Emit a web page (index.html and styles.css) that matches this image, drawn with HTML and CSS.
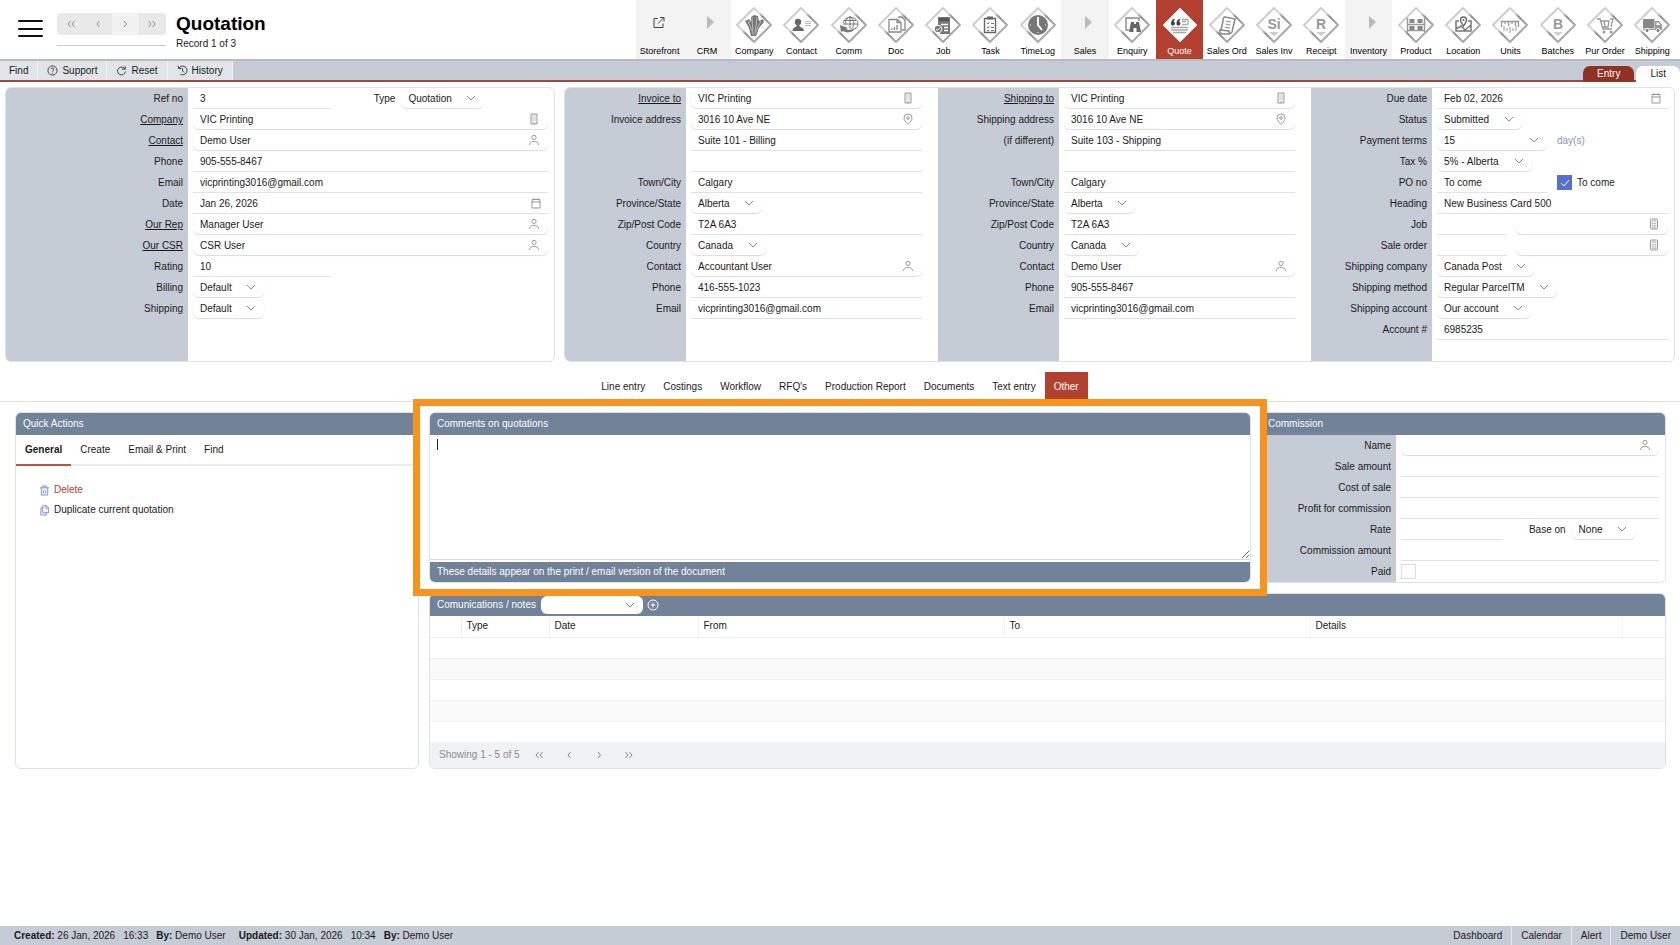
FILE: index.html
```html
<!DOCTYPE html>
<html lang="en">
<head>
    <meta charset="UTF-8">
    <meta name="viewport" content="width=device-width, initial-scale=1.0">
    <title>Quotation</title>
    <link rel="stylesheet" href="styles.css">
</head>
<body>
    <!-- shared icons -->
    <svg class="sprite" aria-hidden="true">
        <linearGradient id="edge" x1="0" y1="0" x2="1" y2="1">
            <stop offset="0" stop-color="#b4b4b4"/>
            <stop offset=".4" stop-color="#dcdcdc"/>
            <stop offset=".5" stop-color="#8f8f8f"/>
            <stop offset="1" stop-color="#c4c4c4"/>
        </linearGradient>
        <symbol id="diamond" viewBox="0 0 38 38">
            <path d="M19 2 36 19 19 36 2 19Z" fill="#fff" stroke="url(#edge)" stroke-width="2" stroke-linejoin="round"/>
        </symbol>
        <symbol id="i-building" viewBox="0 0 12 12">
            <path d="M3 1h6v10H3z" fill="#f4f4f4" stroke="#999"/>
            <path d="M4.500 3h1M6.500 3h1M4.500 5h1M6.500 5h1M4.500 7h1M6.500 7h1M6 9v2" stroke="#999" stroke-width=".8"/>
        </symbol>
        <symbol id="i-user" viewBox="0 0 12 12">
            <circle cx="6" cy="3.400" r="2.100" fill="none" stroke="#999"/>
            <path d="M1.500 11c0-5 9-5 9 0" fill="none" stroke="#999"/>
        </symbol>
        <symbol id="i-pin" viewBox="0 0 12 12">
            <path d="M6 11.300C3.500 9 2 7 2 5a4 4 0 0 1 8 0c0 2-1.500 4-4 6.300z" fill="none" stroke="#999"/>
            <circle cx="6" cy="5" r="1.300" fill="none" stroke="#999"/>
        </symbol>
        <symbol id="i-cal" viewBox="0 0 12 12">
            <path d="M2 2.500h8v8.500H2zM2 5h8M4 .8v2.500M8 .8v2.500" fill="none" stroke="#999"/>
        </symbol>
        <symbol id="i-calc" viewBox="0 0 12 12">
            <rect x="2.500" y="1" width="7" height="10" rx="1" fill="#f4f4f4" stroke="#999"/>
            <path d="M4 3h4M4 5.500h1M5.500 5.500h1M7 5.500h1M4 7.300h1M5.500 7.300h1M7 7.300h1M4 9.200h4" stroke="#999" stroke-width=".8"/>
        </symbol>
    </svg>

    <header class="header">
        <div class="header-left">
            <button class="burger" aria-label="Menu"><span></span><span></span><span></span></button>
            <div class="record-nav">
                <div class="record-buttons">
                    <button aria-label="First"><svg viewBox="0 0 12 12"><path d="M5.500 3 3 6l2.500 3M9.500 3 7 6l2.500 3"/></svg></button>
                    <button aria-label="Previous"><svg viewBox="0 0 12 12"><path d="M7.500 3 5 6l2.500 3"/></svg></button>
                    <button aria-label="Next" disabled><svg viewBox="0 0 12 12"><path d="M5 3l2.500 3L5 9"/></svg></button>
                    <button aria-label="Last"><svg viewBox="0 0 12 12"><path d="M2.500 3 5 6 2.500 9M6.500 3 9 6 6.500 9"/></svg></button>
                </div>
                <div class="record-line"></div>
            </div>
            <div class="title">
                <h1>Quotation</h1>
                <p>Record 1 of 3</p>
            </div>
        </div>
        <nav class="modules">
            <a href="#" class="module group">
                <svg viewBox="0 0 38 38"><path d="M17 12.500h-4v9h9v-4M17 17.500l6-6M19 11.500h4v4" fill="none" stroke="#444"/></svg>
                <span>Storefront</span>
            </a>
            <a href="#" class="module group">
                <svg viewBox="0 0 38 38"><path d="M19 10l7 6-7 7z" fill="#bbb"/></svg>
                <span>CRM</span>
            </a>
            <a href="#" class="module">
                <svg viewBox="0 0 38 38"><use href="#diamond"/><path d="M10 15l4-2 2 3V11l3-2 4 1 1 5 4-2 1 3-5 6-3 8h-5l-2-8z" fill="#777"/><path d="M17 11l1 18M13 15l4 10M22 11l-2 17M26 15l-5 10" stroke="#ccc" stroke-width=".8"/></svg>
                <span>Company</span>
            </a>
            <a href="#" class="module">
                <svg viewBox="0 0 38 38"><use href="#diamond"/><circle cx="16" cy="16" r="3.200" fill="#666"/><path d="M10.500 25c0-4 3.500-3 4.500-6h2c1 3 5 2 5 6z" fill="#666"/><path d="M23 15.500h6M23 17.500h6M23 19.500h6" stroke="#bbb"/></svg>
                <span>Contact</span>
            </a>
            <a href="#" class="module">
                <svg viewBox="0 0 38 38"><use href="#diamond"/><path d="M13 17a7.500 6.500 0 1 1 12 6M20 10.500v12M14 14.500h12M13 18h14.500M20 10.500c-5 3-5 6-4 8M20 10.500c5 4 5 9 1 13" fill="none" stroke="#777"/><path d="M10 19l8 3-2 1c3 2 7 1 10-2-2 5-8 7-13 4l-2 1z" fill="#777"/></svg>
                <span>Comm</span>
            </a>
            <a href="#" class="module">
                <svg viewBox="0 0 38 38"><use href="#diamond"/><path d="M22 12.500V11h3l3 3v10h-3M12 13.500h8l4 3V26H12zM20 13.500v3h4" fill="none" stroke="#888" stroke-width="1.300"/><path d="M15 24v-2M17.500 24v-3M20 24v-5" stroke="#888" stroke-width="1.300"/></svg>
                <span>Doc</span>
            </a>
            <a href="#" class="module">
                <svg viewBox="0 0 38 38"><use href="#diamond"/><path d="M14 11h12v17H16v-6h-2z" fill="#777"/><path d="M15 13.500h10" stroke="#555" stroke-width="3"/><path d="M17 18.500h7M20 21.500h4M20 24.500h4" stroke="#fff" stroke-width="1.300"/><circle cx="14" cy="23" r="3.800" fill="#777" stroke="#fff"/><path d="M12 23l1.500 1.500 2.500-3" fill="none" stroke="#fff"/></svg>
                <span>Job</span>
            </a>
            <a href="#" class="module">
                <svg viewBox="0 0 38 38"><use href="#diamond"/><path d="M13.500 12.500h11v14h-11z" fill="none" stroke="#666" stroke-width="1.400"/><path d="M16 10.500h6v3h-6z" fill="#666"/><path d="M16 17l1 1 1.500-2M16 21l1 1 1.500-2M20 17.500h3M20 21.500h3M16 24.500h2M20 24.500h3" fill="none" stroke="#777"/></svg>
                <span>Task</span>
            </a>
            <a href="#" class="module">
                <svg viewBox="0 0 38 38"><use href="#diamond"/><circle cx="19" cy="19" r="10" fill="#777"/><path d="M19 11v8l4 5" fill="none" stroke="#fff" stroke-width="2"/><path d="M11 19h1M26 19h1M19 26v1" stroke="#fff"/></svg>
                <span>TimeLog</span>
            </a>
            <a href="#" class="module group">
                <svg viewBox="0 0 38 38"><path d="M19 10l7 6-7 7z" fill="#bbb"/></svg>
                <span>Sales</span>
            </a>
            <a href="#" class="module">
                <svg viewBox="0 0 38 38"><use href="#diamond"/><path d="M16 24h-3V12h13v3" fill="none" stroke="#888" stroke-width="1.400"/><path d="M18 16h3v2h2v-2h3l2 10h-4.500v-4h-3v4H16z" fill="#666"/></svg>
                <span>Enquiry</span>
            </a>
            <a href="#" class="module active">
                <svg viewBox="0 0 38 38"><path d="M19 2 36 19 19 36 2 19Z" fill="#fff" stroke="#ddd" stroke-linejoin="round"/><path d="M10 18c0-3 1-5 4-5l-1.500 2.500c2 0 2 4-.5 4-1 0-2-.5-2-1.500zM15.500 18c0-3 1-5 4-5L18 15.500c2 0 2 4-.5 4-1 0-2-.5-2-1.500z" fill="#444"/><path d="M21 13.500h6v5M21 15.500h4M21 18.500h6M10 21.500h17M10 24h17M12 26.500h13" fill="none" stroke="#aaa" stroke-width="1.300"/></svg>
                <span>Quote</span>
            </a>
            <a href="#" class="module">
                <svg viewBox="0 0 38 38"><use href="#diamond"/><path d="M17 11l10 2-3 13c-1 2-3 1-3 0v-1l-9-1c-1 3 1 4 3 4h7M17 11c-2 0-2 2-2 4l-2 9" fill="none" stroke="#888" stroke-width="1.500"/><path d="M18 15l5 1M17.500 18l5 1M17 21l5 1" stroke="#888"/></svg>
                <span>Sales Ord</span>
            </a>
            <a href="#" class="module">
                <svg viewBox="0 0 38 38"><use href="#diamond"/><text x="19" y="23" class="glyph">Si</text><path d="M14 26h10l-5 4z" fill="#ccc"/></svg>
                <span>Sales Inv</span>
            </a>
            <a href="#" class="module">
                <svg viewBox="0 0 38 38"><use href="#diamond"/><text x="19" y="23" class="glyph">R</text><path d="M14 26h10l-5 4z" fill="#ccc"/></svg>
                <span>Receipt</span>
            </a>
            <a href="#" class="module group">
                <svg viewBox="0 0 38 38"><path d="M19 10l7 6-7 7z" fill="#bbb"/></svg>
                <span>Inventory</span>
            </a>
            <a href="#" class="module">
                <svg viewBox="0 0 38 38"><use href="#diamond"/><path d="M10.500 12v14M27.500 12v14M10 18.500h18M10 24.500h18" stroke="#999" stroke-width="1.500"/><path d="M12.500 13h5v4h-5zM20.500 13h5v4h-5zM12.500 20h5v4h-5zM20.500 20h5v4h-5z" fill="#888"/></svg>
                <span>Product</span>
            </a>
            <a href="#" class="module">
                <svg viewBox="0 0 38 38"><use href="#diamond"/><path d="M15 15h-3v10h15V15h-3M12 23l5-3 4 4 6-5" fill="none" stroke="#777" stroke-width="1.500"/><path d="M19.500 20c-2-3-3-4-3-6a3 3 0 0 1 6 0c0 2-1 3-3 6z" fill="#fff" stroke="#666" stroke-width="1.400"/><circle cx="19.500" cy="14" r="1" fill="#666"/></svg>
                <span>Location</span>
            </a>
            <a href="#" class="module">
                <svg viewBox="0 0 38 38"><use href="#diamond"/><path d="M10 15.500h18M10.500 15v6M14 15v3M17.500 15v5M21 15v3M24.500 15v5M27.500 15v6" fill="none" stroke="#999" stroke-width="1.300"/><path d="M13 20v5M16 22v3M19 21v6M22 22v3M25 20v5" stroke="#bbb" stroke-width="1.500"/></svg>
                <span>Units</span>
            </a>
            <a href="#" class="module">
                <svg viewBox="0 0 38 38"><use href="#diamond"/><text x="19" y="23" class="glyph">B</text><path d="M14 26h10l-5 4z" fill="#ccc"/></svg>
                <span>Batches</span>
            </a>
            <a href="#" class="module">
                <svg viewBox="0 0 38 38"><use href="#diamond"/><path d="M11 13h3l3 10h9M15 15h8l-1 6h-6M18 15l1 6M24 13h3l-2 8" fill="none" stroke="#999" stroke-width="1.300"/><circle cx="18" cy="26" r="1.500" fill="#999"/><circle cx="25" cy="26" r="1.500" fill="#999"/></svg>
                <span>Pur Order</span>
            </a>
            <a href="#" class="module">
                <svg viewBox="0 0 38 38"><use href="#diamond"/><path d="M10 13h11.500v9H10z" fill="#888"/><path d="M22 15h4l3 4v5H10v-1.500h12z" fill="#999"/><path d="M23.500 16.500h2l1.500 2.500h-3.500z" fill="#fff"/><circle cx="14" cy="24.500" r="2" fill="#777" stroke="#fff"/><circle cx="25" cy="24.500" r="2" fill="#777" stroke="#fff"/></svg>
                <span>Shipping</span>
            </a>
        </nav>
    </header>

    <div class="toolbar">
        <button class="tool">Find</button>
        <button class="tool"><svg viewBox="0 0 12 12"><circle cx="6" cy="6" r="5"/><path d="M4.500 4.800c0-2 3-2 3-.2C7.500 5.800 6 5.800 6 7.200M6 8.200v1"/></svg>Support</button>
        <button class="tool"><svg viewBox="0 0 12 12"><path d="M9.800 4.500A4.300 4.300 0 1 0 10.300 7M10 1v3.500H6.500"/></svg>Reset</button>
        <button class="tool"><svg viewBox="0 0 12 12"><path d="M2 3.500A4.800 4.800 0 1 1 3.500 10M1 .8l.8 3h3M6 3.500v3l2 1.500"/></svg>History</button>
        <div class="view-tabs">
            <button class="view-tab active">Entry</button>
            <button class="view-tab">List</button>
        </div>
    </div>

    <main class="main">
        <section class="details">
            <div class="panel form form-wide">
                <div class="row">
                    <label for="ref">Ref no</label>
                    <div class="field">
                        <input id="ref" class="line part" value="3">
                        <label for="type" class="pair">Type</label>
                        <select id="type"><option>Quotation</option></select>
                    </div>
                </div>
                <div class="row">
                    <label for="company"><a href="#">Company</a></label>
                    <div class="field"><div class="lookup"><input id="company" value="VIC Printing"><svg><use href="#i-building"/></svg></div></div>
                </div>
                <div class="row">
                    <label for="contact"><a href="#">Contact</a></label>
                    <div class="field"><div class="lookup"><input id="contact" value="Demo User"><svg><use href="#i-user"/></svg></div></div>
                </div>
                <div class="row">
                    <label for="phone">Phone</label>
                    <div class="field"><input id="phone" class="line" value="905-555-8467"></div>
                </div>
                <div class="row">
                    <label for="email">Email</label>
                    <div class="field"><input id="email" class="line" value="vicprinting3016@gmail.com"></div>
                </div>
                <div class="row">
                    <label for="date">Date</label>
                    <div class="field"><div class="lookup date"><input id="date" value="Jan 26, 2026"><svg><use href="#i-cal"/></svg></div></div>
                </div>
                <div class="row">
                    <label for="rep"><a href="#">Our Rep</a></label>
                    <div class="field"><div class="lookup"><input id="rep" value="Manager User"><svg><use href="#i-user"/></svg></div></div>
                </div>
                <div class="row">
                    <label for="csr"><a href="#">Our CSR</a></label>
                    <div class="field"><div class="lookup"><input id="csr" value="CSR User"><svg><use href="#i-user"/></svg></div></div>
                </div>
                <div class="row">
                    <label for="rating">Rating</label>
                    <div class="field"><input id="rating" class="line part" value="10"></div>
                </div>
                <div class="row">
                    <label for="billing">Billing</label>
                    <div class="field"><select id="billing"><option>Default</option></select></div>
                </div>
                <div class="row">
                    <label for="shipping">Shipping</label>
                    <div class="field"><select id="shipping"><option>Default</option></select></div>
                </div>
            </div>

            <div class="panel address">
                <div class="form form-address">
                    <div class="row">
                        <label for="inv-to"><a href="#">Invoice to</a></label>
                        <div class="field"><div class="lookup"><input id="inv-to" value="VIC Printing"><svg><use href="#i-building"/></svg></div></div>
                    </div>
                    <div class="row">
                        <label for="inv-addr">Invoice address</label>
                        <div class="field"><div class="lookup"><input id="inv-addr" value="3016 10 Ave NE"><svg><use href="#i-pin"/></svg></div></div>
                    </div>
                    <div class="row">
                        <span></span>
                        <div class="field"><input class="line" aria-label="Invoice address line 2" value="Suite 101 - Billing"></div>
                    </div>
                    <div class="row">
                        <span></span>
                        <div class="field"><input class="line" aria-label="Invoice address line 3"></div>
                    </div>
                    <div class="row">
                        <label for="inv-town">Town/City</label>
                        <div class="field"><input id="inv-town" class="line" value="Calgary"></div>
                    </div>
                    <div class="row">
                        <label for="inv-prov">Province/State</label>
                        <div class="field"><select id="inv-prov"><option>Alberta</option></select></div>
                    </div>
                    <div class="row">
                        <label for="inv-zip">Zip/Post Code</label>
                        <div class="field"><input id="inv-zip" class="line" value="T2A 6A3"></div>
                    </div>
                    <div class="row">
                        <label for="inv-country">Country</label>
                        <div class="field"><select id="inv-country"><option>Canada</option></select></div>
                    </div>
                    <div class="row">
                        <label for="inv-contact">Contact</label>
                        <div class="field"><div class="lookup"><input id="inv-contact" value="Accountant User"><svg><use href="#i-user"/></svg></div></div>
                    </div>
                    <div class="row">
                        <label for="inv-phone">Phone</label>
                        <div class="field"><input id="inv-phone" class="line" value="416-555-1023"></div>
                    </div>
                    <div class="row">
                        <label for="inv-email">Email</label>
                        <div class="field"><input id="inv-email" class="line" value="vicprinting3016@gmail.com"></div>
                    </div>
                </div>

                <div class="form form-address">
                    <div class="row">
                        <label for="ship-to"><a href="#">Shipping to</a></label>
                        <div class="field"><div class="lookup"><input id="ship-to" value="VIC Printing"><svg><use href="#i-building"/></svg></div></div>
                    </div>
                    <div class="row">
                        <label for="ship-addr">Shipping address</label>
                        <div class="field"><div class="lookup"><input id="ship-addr" value="3016 10 Ave NE"><svg><use href="#i-pin"/></svg></div></div>
                    </div>
                    <div class="row">
                        <label for="ship-addr2">(if different)</label>
                        <div class="field"><input id="ship-addr2" class="line" value="Suite 103 - Shipping"></div>
                    </div>
                    <div class="row">
                        <span></span>
                        <div class="field"><input class="line" aria-label="Shipping address line 3"></div>
                    </div>
                    <div class="row">
                        <label for="ship-town">Town/City</label>
                        <div class="field"><input id="ship-town" class="line" value="Calgary"></div>
                    </div>
                    <div class="row">
                        <label for="ship-prov">Province/State</label>
                        <div class="field"><select id="ship-prov"><option>Alberta</option></select></div>
                    </div>
                    <div class="row">
                        <label for="ship-zip">Zip/Post Code</label>
                        <div class="field"><input id="ship-zip" class="line" value="T2A 6A3"></div>
                    </div>
                    <div class="row">
                        <label for="ship-country">Country</label>
                        <div class="field"><select id="ship-country"><option>Canada</option></select></div>
                    </div>
                    <div class="row">
                        <label for="ship-contact">Contact</label>
                        <div class="field"><div class="lookup"><input id="ship-contact" value="Demo User"><svg><use href="#i-user"/></svg></div></div>
                    </div>
                    <div class="row">
                        <label for="ship-phone">Phone</label>
                        <div class="field"><input id="ship-phone" class="line" value="905-555-8467"></div>
                    </div>
                    <div class="row">
                        <label for="ship-email">Email</label>
                        <div class="field"><input id="ship-email" class="line" value="vicprinting3016@gmail.com"></div>
                    </div>
                </div>

                <div class="form">
                    <div class="row">
                        <label for="due">Due date</label>
                        <div class="field"><div class="lookup date"><input id="due" value="Feb 02, 2026"><svg><use href="#i-cal"/></svg></div></div>
                    </div>
                    <div class="row">
                        <label for="status">Status</label>
                        <div class="field"><select id="status"><option>Submitted</option></select></div>
                    </div>
                    <div class="row">
                        <label for="terms">Payment terms</label>
                        <div class="field">
                            <select id="terms" class="medium"><option>15</option></select>
                            <span class="unit">day(s)</span>
                        </div>
                    </div>
                    <div class="row">
                        <label for="tax">Tax %</label>
                        <div class="field"><select id="tax"><option>5% - Alberta</option></select></div>
                    </div>
                    <div class="row">
                        <label for="po">PO no</label>
                        <div class="field">
                            <input id="po" class="line medium" value="To come">
                            <input type="checkbox" id="tocome" checked>
                            <label for="tocome" class="check-label">To come</label>
                        </div>
                    </div>
                    <div class="row">
                        <label for="heading">Heading</label>
                        <div class="field"><input id="heading" class="line" value="New Business Card 500"></div>
                    </div>
                    <div class="row">
                        <label for="job">Job</label>
                        <div class="field">
                            <input id="job" class="line small">
                            <div class="lookup"><input aria-label="Job name"><svg><use href="#i-calc"/></svg></div>
                        </div>
                    </div>
                    <div class="row">
                        <label for="order">Sale order</label>
                        <div class="field">
                            <input id="order" class="line small">
                            <div class="lookup"><input aria-label="Sale order name"><svg><use href="#i-calc"/></svg></div>
                        </div>
                    </div>
                    <div class="row">
                        <label for="ship-co">Shipping company</label>
                        <div class="field"><select id="ship-co"><option>Canada Post</option></select></div>
                    </div>
                    <div class="row">
                        <label for="ship-method">Shipping method</label>
                        <div class="field"><select id="ship-method"><option>Regular ParcelTM</option></select></div>
                    </div>
                    <div class="row">
                        <label for="ship-account">Shipping account</label>
                        <div class="field"><select id="ship-account"><option>Our account</option></select></div>
                    </div>
                    <div class="row">
                        <label for="account">Account #</label>
                        <div class="field"><input id="account" class="line" value="6985235"></div>
                    </div>
                </div>
            </div>
        </section>

        <nav class="tabs">
            <a href="#">Line entry</a>
            <a href="#">Costings</a>
            <a href="#">Workflow</a>
            <a href="#">RFQ's</a>
            <a href="#">Production Report</a>
            <a href="#">Documents</a>
            <a href="#">Text entry</a>
            <a href="#" class="active">Other</a>
        </nav>

        <section class="other">
            <div class="panel quick">
                <h2 class="panel-head">Quick Actions</h2>
                <div class="quick-tabs">
                    <button class="active">General</button>
                    <button>Create</button>
                    <button>Email &amp; Print</button>
                    <button>Find</button>
                </div>
                <div class="quick-list">
                    <button class="delete"><svg viewBox="0 0 12 12"><path d="M1 3h10M4 3V1h4v2M2.500 3v8h7V3M5 6v3M7 6v3"/></svg>Delete</button>
                    <button><svg viewBox="0 0 12 12"><path d="M4 .8h4L10.500 3v5.500H4zM4 3H2v8h6V8.500M7.500 1v2.500h3"/></svg>Duplicate current quotation</button>
                </div>
            </div>

            <div class="right">
                <div class="right-top">
                    <div class="highlight">
                        <div class="panel comments">
                            <h2 class="panel-head"><label for="comments">Comments on quotations</label></h2>
                            <div class="comments-body">
                                <textarea id="comments"></textarea>
                                <span class="caret"></span>
                            </div>
                            <div class="panel-foot">These details appear on the print / email version of the document</div>
                        </div>
                    </div>
                    <div class="panel commission">
                        <h2 class="panel-head">Commission</h2>
                        <div class="form form-commission">
                            <div class="row">
                                <label for="c-name">Name</label>
                                <div class="field"><div class="lookup"><input id="c-name"><svg><use href="#i-user"/></svg></div></div>
                            </div>
                            <div class="row">
                                <label for="c-sale">Sale amount</label>
                                <div class="field"><input id="c-sale" class="line"></div>
                            </div>
                            <div class="row">
                                <label for="c-cost">Cost of sale</label>
                                <div class="field"><input id="c-cost" class="line"></div>
                            </div>
                            <div class="row">
                                <label for="c-profit">Profit for commission</label>
                                <div class="field"><input id="c-profit" class="line"></div>
                            </div>
                            <div class="row">
                                <label for="c-rate">Rate</label>
                                <div class="field">
                                    <input id="c-rate" class="line part">
                                    <label for="c-base" class="pair">Base on</label>
                                    <select id="c-base"><option>None</option></select>
                                </div>
                            </div>
                            <div class="row">
                                <label for="c-amount">Commission amount</label>
                                <div class="field"><input id="c-amount" class="line"></div>
                            </div>
                            <div class="row">
                                <label for="c-paid">Paid</label>
                                <div class="field"><input type="checkbox" id="c-paid"></div>
                            </div>
                        </div>
                    </div>
                </div>

                <div class="panel notes">
                    <div class="panel-head">
                        <label for="note-type">Comunications / notes</label>
                        <select id="note-type"><option></option></select>
                        <button class="add" aria-label="Add note"><svg viewBox="0 0 12 12"><circle cx="6" cy="6" r="5"/><path d="M6 3.500v5M3.500 6h5"/></svg></button>
                    </div>
                    <table>
                        <colgroup><col class="c1"><col class="c2"><col class="c3"><col class="c4"><col class="c5"><col class="c6"><col class="c7"></colgroup>
                        <thead>
                            <tr><th></th><th>Type</th><th>Date</th><th>From</th><th>To</th><th>Details</th><th></th></tr>
                        </thead>
                        <tbody>
                            <tr><td colspan="7"></td></tr>
                            <tr><td colspan="7"></td></tr>
                            <tr><td colspan="7"></td></tr>
                            <tr><td colspan="7"></td></tr>
                            <tr><td colspan="7"></td></tr>
                        </tbody>
                    </table>
                    <div class="pager">
                        <span>Showing 1 - 5 of 5</span>
                        <button aria-label="First page"><svg viewBox="0 0 12 12"><path d="M5.500 3 3 6l2.500 3M9.500 3 7 6l2.500 3"/></svg></button>
                        <button aria-label="Previous page"><svg viewBox="0 0 12 12"><path d="M7.500 3 5 6l2.500 3"/></svg></button>
                        <button aria-label="Next page"><svg viewBox="0 0 12 12"><path d="M5 3l2.500 3L5 9"/></svg></button>
                        <button aria-label="Last page"><svg viewBox="0 0 12 12"><path d="M2.500 3 5 6 2.500 9M6.500 3 9 6 6.500 9"/></svg></button>
                    </div>
                </div>
            </div>
        </section>
    </main>

    <footer class="statusbar">
        <div class="stamps">
            <span><b>Created:</b> 26 Jan, 2026</span>
            <span>16:33</span>
            <span class="by"><b>By:</b> Demo User</span>
            <span><b>Updated:</b> 30 Jan, 2026</span>
            <span>10:34</span>
            <span><b>By:</b> Demo User</span>
        </div>
        <nav class="links">
            <a href="#">Dashboard</a>
            <a href="#">Calendar</a>
            <a href="#">Alert</a>
            <a href="#">Demo User</a>
        </nav>
    </footer>
</body>
</html>
```
FILE: styles.css
```css
* {
    box-sizing: border-box;
}
body {
    margin: 0;
    min-height: 100vh;
    display: flex;
    flex-direction: column;
    background: #fff;
    color: #1a1a1a;
    font-family: "Liberation Sans", Arial, sans-serif;
    font-size: 10px;
    line-height: 12px;
}
button, input, select, textarea {
    font: inherit;
    color: inherit;
    background: none;
    border: 0;
    margin: 0;
    padding: 0;
    outline: none;
}
a {
    color: inherit;
    text-decoration: none;
}
h1, h2, p {
    margin: 0;
    font-weight: normal;
}
.sprite {
    position: absolute;
    width: 0;
    height: 0;
}

/* header */
.header {
    display: grid;
    grid-template-columns: minmax(0, 636fr) minmax(0, 1044fr);
    height: 61px;
    border-bottom: 2px solid #b9bbbe;
}
.header-left {
    display: flex;
    padding-left: 18px;
}
.burger {
    width: 25px;
    height: 17px;
    margin-top: 20px;
    display: flex;
    flex-direction: column;
    justify-content: space-between;
}
.burger span {
    width: 100%;
    height: 2px;
    background: #111;
    border-radius: 1px;
}
.record-nav {
    width: 109px;
    margin: 13px 10px 0 14px;
}
.record-buttons {
    display: flex;
    height: 22px;
    border-radius: 4px;
    overflow: hidden;
    background: #e9e9e9;
}
.record-buttons button {
    flex: 1;
    display: flex;
    align-items: center;
    justify-content: center;
}
.record-buttons button:disabled {
    background: #f1f1f1;
}
.record-buttons svg, .pager svg {
    width: 12px;
    height: 12px;
    fill: none;
    stroke: #888;
}
.record-line {
    height: 1px;
    margin-top: 10px;
    background: #c6ccd6;
}
.title h1 {
    margin-top: 13px;
    font-size: 19px;
    line-height: 22px;
    font-weight: bold;
    color: #000;
}
.title p {
    margin-top: 3px;
}
.modules {
    display: flex;
    padding-right: 4px;
}
.module {
    flex: 1 1 0;
    min-width: 0;
    display: flex;
    flex-direction: column;
    align-items: center;
    gap: 1px;
    padding-top: 6px;
    font-size: 9px;
    white-space: nowrap;
    color: #000;
}
.module svg {
    flex: none;
    width: 38px;
    height: 38px;
}
.module.group {
    background: #f3f3f3;
}
.module.active {
    background: #b34132;
    color: #fff;
}
.glyph {
    font-size: 14px;
    font-weight: bold;
    text-anchor: middle;
    fill: #999;
}

/* toolbar */
.toolbar {
    display: flex;
    height: 21px;
    background: #c6ccd6;
    border-bottom: 2px solid #9c4a3f;
}
.tool {
    display: flex;
    align-items: center;
    gap: 4px;
    padding: 0 9px;
    background: #e1e5ea;
    border-right: 1px solid #f0f2f4;
}
.tool svg {
    width: 11px;
    height: 11px;
    fill: none;
    stroke: #333;
}
.view-tabs {
    display: flex;
    gap: 2px;
    margin: 5px 0 -1px auto;
}
.view-tab {
    padding: 0 14px;
    height: 16px;
    border-radius: 7px 7px 0 0;
    background: #fff;
}
.view-tab.active {
    background: #8f3123;
    color: #fff;
}

/* panels */
.main {
    flex: 1;
}
.panel {
    border: 1px solid #dde2ea;
    border-radius: 6px;
    overflow: hidden;
}
.panel-head, .panel-foot {
    display: flex;
    align-items: center;
    padding: 0 7px;
    background: #718299;
    color: #fff;
    font-size: 10px;
}
.panel-head {
    height: 22px;
}
.panel-foot {
    height: 20px;
}
.details {
    display: grid;
    grid-template-columns: minmax(0, 550fr) minmax(0, 1111fr);
    gap: 9px;
    padding: 5px 5px 0;
}
.address {
    display: grid;
    grid-template-columns: minmax(0, 373fr) minmax(0, 373fr) minmax(0, 363fr);
}

/* label column + field column */
.form {
    --side: 121px;
    --end: 6px;
    padding-bottom: 21px;
    background: linear-gradient(to right, #c6ccd6 var(--side), #fff var(--side));
}
.form-wide {
    --side: 182px;
    padding-bottom: 42px;
}
.form-address {
    --end: 16px;
}
.form-commission {
    --side: 135px;
    padding-bottom: 0;
}
.row {
    display: grid;
    grid-template-columns: var(--side) minmax(0, 1fr);
    height: 21px;
}
.row > label {
    padding: 5px 5px 0 0;
    text-align: right;
}
.row > label a {
    text-decoration: underline;
}
.field {
    display: flex;
    align-items: flex-start;
    padding: 0 var(--end) 0 5px;
}
.line {
    flex: 1;
    min-width: 0;
    height: 21px;
    padding: 0 7px;
    border-bottom: 1px solid #e2e2e4;
}
.line.part {
    flex: 0 0 39%;
}
.line.small {
    flex: 0 0 70px;
    margin-right: 9px;
}
.medium {
    flex: 0 0 110px;
    margin-right: 10px;
}
.pair {
    flex: 0 0 64px;
    padding: 5px 0 0;
    margin-right: 6px;
    text-align: right;
}
.lookup {
    flex: 1;
    min-width: 0;
    height: 20px;
    display: flex;
    align-items: center;
    padding: 0 8px 0 7px;
    border-radius: 6px;
    box-shadow: 0 1px 1px #dcdce0;
}
.lookup input {
    flex: 1;
    min-width: 0;
    height: 20px;
}
.lookup svg {
    width: 12px;
    height: 12px;
}
.lookup.date {
    height: 21px;
    padding-right: 6px;
    border-radius: 0;
    border-bottom: 1px solid #e2e2e4;
    box-shadow: none;
}
select {
    appearance: none;
    height: 20px;
    padding: 1px 32px 0 7px;
    border-radius: 6px;
    box-shadow: 0 1px 1px #dcdce0;
    background: url("data:image/svg+xml,%3Csvg xmlns='http://www.w3.org/2000/svg' viewBox='0 0 10 6'%3E%3Cpath d='M1 1l4 4 4-4' fill='none' stroke='%23888'/%3E%3C/svg%3E") no-repeat right 8px center / 10px 6px;
}
.unit {
    padding-top: 5px;
    color: #8494b0;
}
input[type="checkbox"] {
    appearance: none;
    width: 15px;
    height: 15px;
    margin-top: 3px;
    border: 1px solid #dcdcdf;
}
input[type="checkbox"]:checked {
    border: 0;
    background: #5470d0 url("data:image/svg+xml,%3Csvg xmlns='http://www.w3.org/2000/svg' viewBox='0 0 10 10'%3E%3Cpath d='M1 5l3 3 5-6' fill='none' stroke='%23fff'/%3E%3C/svg%3E") no-repeat center / 10px 10px;
}
.check-label {
    padding: 5px 0 0 5px;
}

/* section tabs */
.tabs {
    display: flex;
    justify-content: center;
    height: 40px;
    padding-top: 10px;
    border-bottom: 1px solid #e0e0e2;
}
.tabs a {
    padding: 9px 9px 0;
}
.tabs .active {
    background: #b34132;
    color: #fff;
}

.other {
    display: grid;
    grid-template-columns: minmax(0, 404fr) minmax(0, 1237fr);
    gap: 10px;
    padding: 10px 14px 0 15px;
}
.quick-tabs {
    display: flex;
    height: 31px;
    border-bottom: 2px solid #ececee;
}
.quick-tabs button {
    height: 31px;
    padding: 0 9px;
    border-bottom: 2px solid transparent;
}
.quick-tabs .active {
    font-weight: bold;
    border-color: #c0503f;
}
.quick-list {
    display: flex;
    flex-direction: column;
    align-items: flex-start;
    padding: 14px 23px;
}
.quick-list button {
    display: flex;
    align-items: center;
    gap: 4px;
    height: 20px;
}
.quick-list svg {
    width: 11px;
    height: 11px;
    fill: #eef0fc;
    stroke: #7f8fd8;
}
.quick-list .delete {
    color: #b5402e;
}

.right {
    display: flex;
    flex-direction: column;
    gap: 10px;
}
.right-top {
    display: grid;
    grid-template-columns: minmax(0, 822fr) minmax(0, 406fr);
    gap: 9px;
}
/* orange frame drawn over the neighbouring panels */
.highlight {
    position: relative;
    display: grid;
}
.highlight::after {
    content: "";
    position: absolute;
    inset: -13px -16px;
    border: 7px solid #f8941d;
    pointer-events: none;
    z-index: 1;
}
.comments {
    display: flex;
    flex-direction: column;
}
.comments-body {
    position: relative;
    flex: 1;
    display: flex;
    padding-bottom: 2px;
}
.comments textarea {
    flex: 1;
    padding: 5px 7px;
    border-bottom: 1px solid #dadada;
}
.caret {
    position: absolute;
    left: 7px;
    top: 4px;
    width: 1px;
    height: 11px;
    background: #222;
}

/* notes */
.notes .panel-head select {
    width: 102px;
    height: 18px;
    margin: 0 4px 0 5px;
    background-color: #fff;
    box-shadow: none;
}
.add {
    display: flex;
}
.add svg {
    width: 12px;
    height: 12px;
    fill: none;
    stroke: #fff;
}
table {
    width: 100%;
    table-layout: fixed;
    border-collapse: collapse;
}
.c1 { width: 31px; }
.c2 { width: 88px; }
.c3 { width: 149px; }
.c4, .c5 { width: 306px; }
.c6 { width: 312px; }
.c7 { width: 43px; }
th {
    height: 21px;
    padding: 0 5px;
    font-weight: normal;
    text-align: left;
    border-right: 1px solid #f2f2f3;
    border-bottom: 1px solid #f0f0f1;
}
td {
    height: 21px;
    padding: 0;
    border-bottom: 1px solid #f2f2f3;
}
tbody tr:nth-child(even) {
    background: #fafafa;
}
.pager {
    display: flex;
    align-items: center;
    height: 25px;
    padding-left: 9px;
    background: #f0f2f4;
    color: #8a8a8a;
}
.pager span {
    margin-right: 4px;
}
.pager button {
    width: 30px;
    display: flex;
    justify-content: center;
}

/* status bar */
.statusbar {
    display: flex;
    justify-content: space-between;
    height: 19px;
    background: #c6ccd6;
    line-height: 20px;
}
.stamps {
    display: flex;
    gap: 8px;
    padding-left: 14px;
}
.stamps .by {
    margin-right: 5px;
}
.links {
    display: flex;
}
.links a {
    padding: 0 9px;
}
.links a + a {
    border-left: 1px solid #e4e7ec;
}
```
